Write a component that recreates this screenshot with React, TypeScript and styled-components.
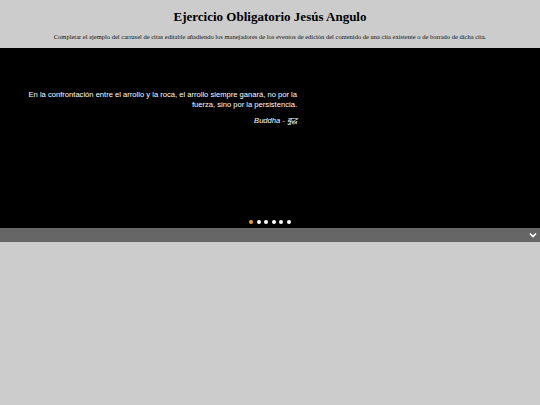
import React from "react";
import styled, { createGlobalStyle } from "styled-components";

const Global = createGlobalStyle`
  html, body { margin: 0; padding: 0; background: #cccccc; }
  body { font-family: "Liberation Serif", "Times New Roman", serif; }
`;

const Header = styled.header`
  text-align: center;
  padding-top: 9px;
  height: 48px;
  box-sizing: border-box;
`;

const Title = styled.h1`
  margin: 0;
  font-size: 13px;
  font-weight: bold;
  color: #000;
  line-height: 15px;
`;

const Subtitle = styled.p`
  margin: 9px 0 0;
  font-size: 6.5px;
  line-height: 8px;
  color: #111;
`;

const Carousel = styled.section`
  background: #000;
  height: 180px;
  display: flex;
  flex-direction: column;
  align-items: flex-start;
`;

const Quote = styled.blockquote`
  margin: 42px 0 0 0;
  width: 297px;
  box-sizing: border-box;
  padding-left: 26px;
  text-align: right;
  font-family: "Liberation Sans", Arial, sans-serif;
  color: #fff;
  font-size: 7.6px;
  line-height: 9.5px;
`;

const Author = styled.p`
  margin: 7px 0 0;
  font-style: italic;
`;

const Dots = styled.div`
  margin-top: auto;
  margin-bottom: 4px;
  align-self: stretch;
  display: flex;
  justify-content: flex-start;
  padding-left: 249px;
  gap: 3.5px;
`;

const Dot = styled.span<{ $active?: boolean }>`
  width: 4px;
  height: 4px;
  border-radius: 50%;
  background: ${(p) => (p.$active ? "#f0a030" : "#fff")};
`;

const Bar = styled.div`
  background: #666666;
  height: 14px;
  display: flex;
  justify-content: flex-end;
  align-items: center;
  padding-right: 3px;
`;

export default function App() {
  return (
    <>
      <Global />
      <Header>
        <Title>Ejercicio Obligatorio Jesús Angulo</Title>
        <Subtitle>
          Completar el ejemplo del carrusel de citas editable añadiendo los manejadores de los eventos de edición del contenido de una cita existente o de borrado de dicha cita.
        </Subtitle>
      </Header>
      <Carousel>
        <Quote>
          En la confrontación entre el arrollo y la roca, el arrollo siempre ganará, no por la fuerza, sino por la persistencia.
          <Author>Buddha - बुद्ध</Author>
        </Quote>
        <Dots>
          {[0, 1, 2, 3, 4, 5].map((i) => (
            <Dot key={i} $active={i === 0} />
          ))}
        </Dots>
      </Carousel>
      <Bar>
        <svg width="8" height="6" viewBox="0 0 8 6">
          <path d="M1 1.5 L4 4.5 L7 1.5" stroke="#fff" strokeWidth="1.6" fill="none" />
        </svg>
      </Bar>
    </>
  );
}
